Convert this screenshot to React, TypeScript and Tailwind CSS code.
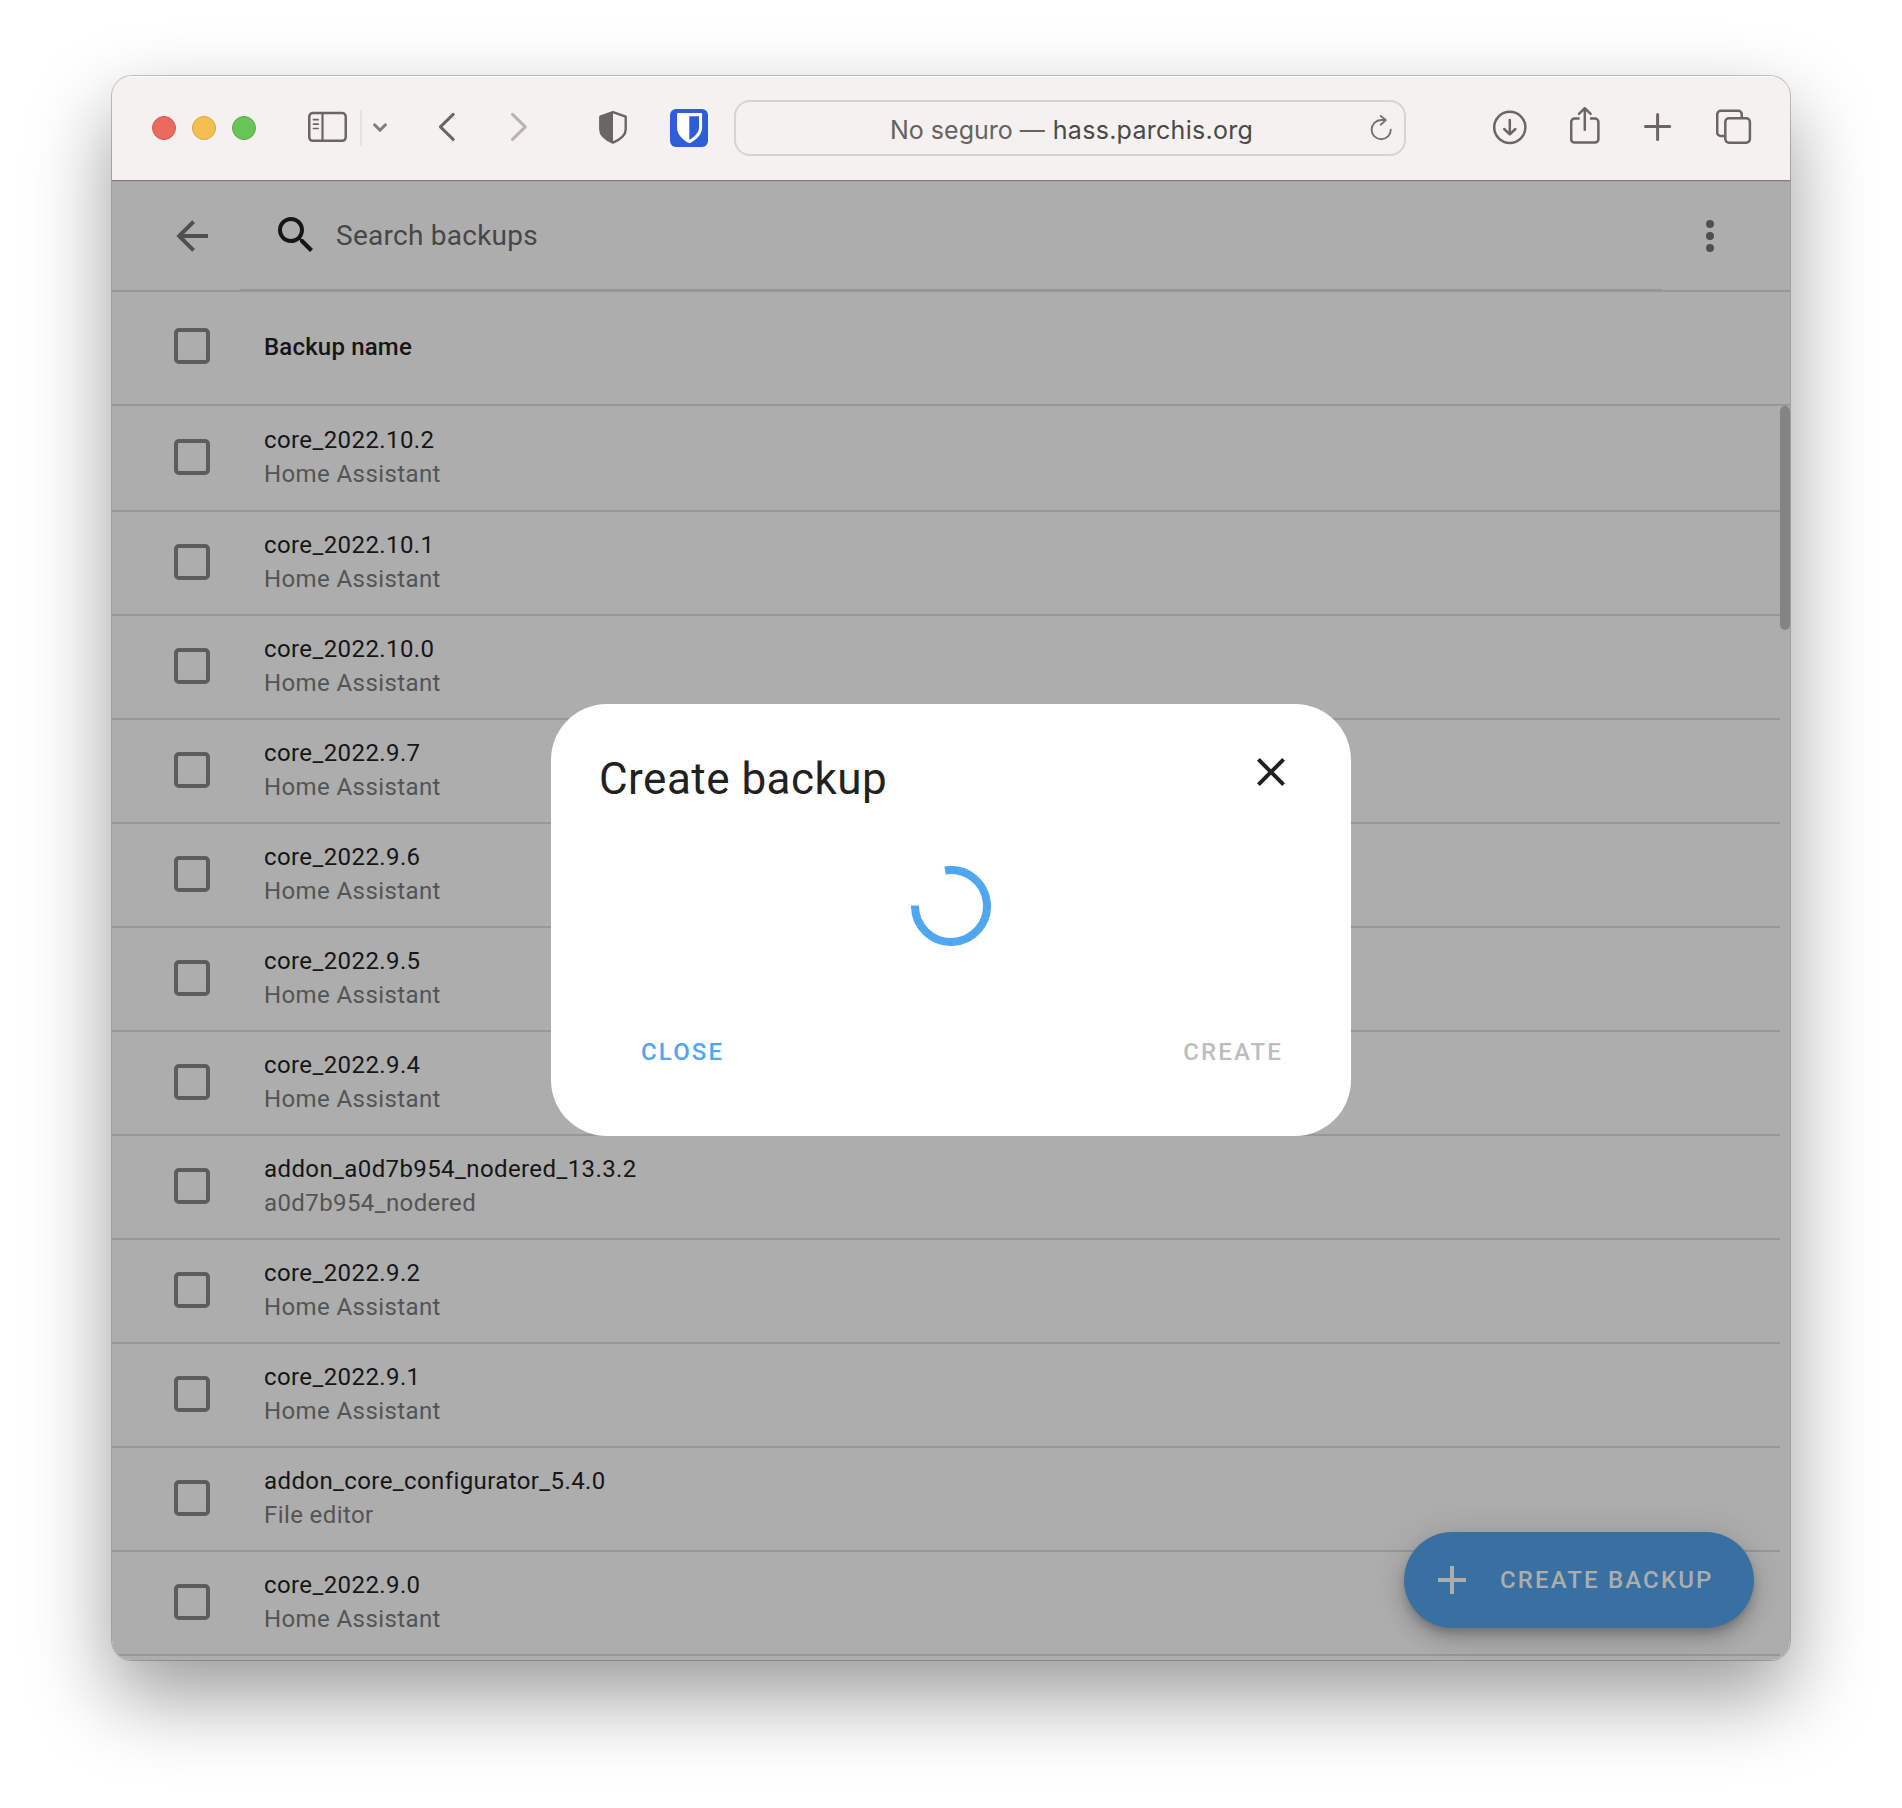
import React from "react";

type Backup = { name: string; source: string };

const HA = "Home Assistant";

const backups: Backup[] = [
  { name: "core_2022.10.2", source: HA },
  { name: "core_2022.10.1", source: HA },
  { name: "core_2022.10.0", source: HA },
  { name: "core_2022.9.7", source: HA },
  { name: "core_2022.9.6", source: HA },
  { name: "core_2022.9.5", source: HA },
  { name: "core_2022.9.4", source: HA },
  { name: "addon_a0d7b954_nodered_13.3.2", source: "a0d7b954_nodered" },
  { name: "core_2022.9.2", source: HA },
  { name: "core_2022.9.1", source: HA },
  { name: "addon_core_configurator_5.4.0", source: "File editor" },
  { name: "core_2022.9.0", source: HA },
];

function MdiIcon({ d, className }: { d: string; className: string }) {
  return (
    <svg viewBox="0 0 24 24" className={`size-12 shrink-0 fill-current ${className}`}>
      <path d={d} />
    </svg>
  );
}

function Checkbox() {
  return <span className="size-9 shrink-0 rounded-[5px] border-4 border-[#5d5d5d]" />;
}

/* Safari toolbar: every glyph sits in a full-height 104px column. */
function Toolbar() {
  return (
    <div className="flex h-[104px] shrink-0 items-center bg-[#f5f1f0] text-[#6b6564] shadow-[inset_0_1px_0_#fdfcfc]">
      <div className="ml-10 flex gap-4">
        <span className="size-6 rounded-full border border-[#d7584d] bg-[#ea6a5f]" />
        <span className="size-6 rounded-full border border-[#dfa43f] bg-[#f4bf50]" />
        <span className="size-6 rounded-full border border-[#56ae43] bg-[#66c556]" />
      </div>

      {/* sidebar */}
      <svg viewBox="0 0 39 104" className="ml-[52px] h-[104px] w-[39px]" fill="none" stroke="currentColor">
        <rect x="1.25" y="37.05" width="36.5" height="27.8" rx="3.6" strokeWidth="2.5" />
        <path d="M14.5 37v28" strokeWidth="2.2" />
        <path d="M5.5 43.7h4.6M5.5 48.2h4.6M5.5 52.5h4.6" strokeWidth="1.7" strokeLinecap="round" />
      </svg>
      <span className="ml-[13px] h-9 w-0.5 bg-[#e5e1e0]" />
      <svg viewBox="0 0 16 104" className="ml-[10px] h-[104px] w-4" fill="none" stroke="#817d7e" strokeWidth="3" strokeLinecap="round" strokeLinejoin="round">
        <path d="M2.6 48.8 8 54.3l5.4-5.5" />
      </svg>
      <svg viewBox="0 0 18 104" className="ml-[50px] h-[104px] w-[18px]" fill="none" stroke="currentColor" strokeWidth="3" strokeLinecap="round" strokeLinejoin="round">
        <path d="M15.200 38.400 2.400 50.900l12.800 12.500" />
      </svg>
      <svg viewBox="0 0 18 104" className="ml-[54px] h-[104px] w-[18px]" fill="none" stroke="#b8b3b2" strokeWidth="3" strokeLinecap="round" strokeLinejoin="round">
        <path d="M2.500 38.400 15.300 50.900 2.500 63.400" />
      </svg>

      {/* privacy shield */}
      <svg viewBox="0 0 28 104" className="ml-[71px] h-[104px] w-7">
        <path d="M14 36.200 26.700 40.700V53.500C26.700 59.200 20 64 14 66.600 8 64 1.300 59.200 1.300 53.500V40.700Z" fill="none" stroke="currentColor" strokeWidth="2.4" strokeLinejoin="round" />
        <path d="M14 36v31C8 64.500 1 59.500 1 53.500V40.500Z" fill="currentColor" />
      </svg>

      {/* password manager badge */}
      <svg viewBox="0 0 38 104" className="ml-[43px] h-[104px] w-[38px]">
        <rect y="33" width="38" height="38" rx="6" fill="#2f5dd7" />
        <path d="M8 37h23.200a.9.9 0 0 1 .9.900V51.500C32.100 59 25 64.800 19.500 67.200 14 64.800 7 59 7 51.500V37.900a1 1 0 0 1 1-.9Z" fill="#fff" />
        <path d="M19.300 40.200H29V51.500C29 56.500 24.300 61 19.300 63.800Z" fill="#2f5dd7" />
      </svg>

      {/* address field */}
      <div className="ml-[26px] flex h-14 w-[672px] items-center rounded-2xl border-2 border-[#d7d3d2] font-['Inter',sans-serif] text-[25px] leading-[30px]">
        <p className="ml-[154px] mt-[3px] whitespace-pre text-[#666261]">
          No seguro — <span className="ml-px tracking-[0.28px] text-[#4b4847]">hass.parchis.org</span>
        </p>
        <svg viewBox="0 0 24 52" className="ml-auto mr-[11px] h-[52px] w-6" fill="none" stroke="#777271" strokeWidth="1.9" strokeLinecap="round" strokeLinejoin="round">
          <path d="M21.800 27.600a9.600 9.600 0 1 1-9.600-9.600h4.600M11.700 13.900l5.100 4.200-5.100 4.600" />
        </svg>
      </div>

      {/* downloads */}
      <svg viewBox="0 0 34 104" className="ml-[87px] h-[104px] w-[34px]" fill="none" stroke="currentColor" strokeWidth="2.5" strokeLinecap="round" strokeLinejoin="round">
        <circle cx="16.8" cy="51.3" r="15.600" />
        <path d="M16.800 44v14M11.200 53l5.600 5.300 5.600-5.300" />
      </svg>
      {/* share */}
      <svg viewBox="0 0 30 104" className="ml-[43px] h-[104px] w-[30px]" fill="none" stroke="currentColor" strokeWidth="2.5" strokeLinecap="round" strokeLinejoin="round">
        <path d="M9.600 42.600H4.600a3.400 3.400 0 0 0-3.400 3.400V63.200a3.400 3.400 0 0 0 3.400 3.400H25a3.400 3.400 0 0 0 3.400-3.400V46a3.400 3.400 0 0 0-3.400-3.400H20" strokeLinecap="butt" />
        <path d="M14.800 53.800V32.500M9 37.800l5.800-5.600 5.800 5.600" />
      </svg>
      {/* new tab */}
      <svg viewBox="0 0 28 104" className="ml-[44px] h-[104px] w-7" fill="none" stroke="currentColor" strokeWidth="3" strokeLinecap="round">
        <path d="M13.600 38.400v25.200M1.500 50.500h24.200" />
      </svg>
      {/* tab overview */}
      <svg viewBox="0 0 36 104" className="ml-[44px] h-[104px] w-9" fill="none" stroke="currentColor" strokeWidth="2.5">
        <path d="M8.500 60H4.800a3.600 3.600 0 0 1-3.600-3.600V38.400a3.600 3.600 0 0 1 3.600-3.600H22.200a3.600 3.600 0 0 1 3.600 3.600V42" />
        <rect x="9.300" y="42.300" width="24.600" height="24.400" rx="3.600" />
      </svg>
    </div>
  );
}

function SearchHeader() {
  return (
    <div className="flex h-28 shrink-0 items-center border-b-2 border-[#979797] shadow-[inset_0_1px_0_#7f7f7f,inset_0_2px_0_#a1a1a1]">
      <MdiIcon
        className="ml-14 mt-0.5 text-[#4f4f4f]"
        d="M20,11V13H8L13.5,18.5L12.08,19.92L4.16,12L12.08,4.08L13.5,5.5L8,11H20Z"
      />
      <div className="ml-6 flex h-full w-[1422px] items-center border-b border-[#969696]">
        <MdiIcon
          className="mt-px ml-8 text-[#161616]"
          d="M9.5,3A6.5,6.5 0 0,1 16,9.5C16,11.11 15.41,12.59 14.44,13.73L14.71,14H15.5L20.5,19L19,20.5L14,15.5V14.71L13.73,14.44C12.59,15.41 11.11,16 9.5,16A6.5,6.5 0 0,1 3,9.5A6.5,6.5 0 0,1 9.5,3M9.5,5C7,5 5,7 5,9.5C5,12 7,14 9.5,14C12,14 14,12 14,9.5C14,7 12,5 9.5,5Z"
        />
        <span className="ml-4 mt-0.5 text-[28px] leading-8 tracking-[0.26px] text-[#474747]">Search backups</span>
      </div>
      <MdiIcon
        className="ml-6 mt-0.5 text-[#4f4f4f]"
        d="M12,16A2,2 0 0,1 14,18A2,2 0 0,1 12,20A2,2 0 0,1 10,18A2,2 0 0,1 12,16M12,10A2,2 0 0,1 14,12A2,2 0 0,1 12,14A2,2 0 0,1 10,12A2,2 0 0,1 12,10M12,4A2,2 0 0,1 14,6A2,2 0 0,1 12,8A2,2 0 0,1 10,6A2,2 0 0,1 12,4Z"
      />
    </div>
  );
}

function BackupRow({ backup }: { backup: Backup }) {
  return (
    <div className="flex h-[104px] shrink-0 items-start border-t-2 border-[#979797] px-[62px] pt-4 first:border-t-0 first:pt-[17px]">
      <span className="mt-4 flex">
        <Checkbox />
      </span>
      <div className="ml-[54px] text-2xl leading-[34px] tracking-[0.4px]">
        <p className="text-[#161616]">{backup.name}</p>
        <p className="text-[#545454]">{backup.source}</p>
      </div>
    </div>
  );
}

function BackupTable() {
  return (
    <div className="flex min-h-0 grow flex-col">
      <div className="flex h-[114px] shrink-0 items-center border-b-2 border-[#979797] px-[62px]">
        <span className="-mt-1 flex">
          <Checkbox />
        </span>
        <span className="-mt-0.5 ml-[54px] text-2xl font-medium leading-[34px] tracking-[0.18px] text-[#161616]">Backup name</span>
      </div>
      <div className="flex min-h-0 grow items-start overflow-hidden">
        <div className="flex grow flex-col">
          {backups.map((b) => (
            <BackupRow key={b.name} backup={b} />
          ))}
          <div className="h-2 border-t-2 border-[#979797]" />
        </div>
        <span className="h-56 w-2.5 rounded-full bg-[#848484]" />
      </div>
    </div>
  );
}

function CreateButton() {
  return (
    <button className="absolute bottom-8 right-9 flex h-24 w-[350px] items-center rounded-full bg-[#3870a1] text-[#adadad] shadow-[0_6px_10px_-2px_rgba(0,0,0,0.2),0_12px_20px_rgba(0,0,0,0.14),0_2px_36px_rgba(0,0,0,0.12)]">
      <MdiIcon className="ml-6" d="M19,13H13V19H11V13H5V11H11V5H13V11H19V13Z" />
      <span className="ml-6 whitespace-nowrap text-2xl font-medium leading-8 tracking-[2.14px]">CREATE BACKUP</span>
    </button>
  );
}

function CreateDialog() {
  return (
    <div className="absolute left-[439px] top-[628px] flex h-[432px] w-[800px] flex-col rounded-[56px] bg-white">
      <div className="flex items-start justify-between pl-12 pr-14 pt-11">
        <h2 className="mt-1 text-[44px] leading-[54px] tracking-[0.48px] text-[#212121]">Create backup</h2>
        <MdiIcon
          className="text-[#212121]"
          d="M19,6.41L17.59,5L12,10.59L6.41,5L5,6.41L10.59,12L5,17.59L6.41,19L12,13.41L17.59,19L19,17.59L13.41,12L19,6.41Z"
        />
      </div>
      <div className="mt-[60px] flex justify-center">
        <svg viewBox="-40 -40 80 80" className="size-20" fill="none" stroke="#51a7ef" strokeWidth="8">
          <path d="M-5.940-35.510A36 36 0 1 1-36-.5" />
        </svg>
      </div>
      <div className="mt-[90px] flex justify-between pl-[90px] pr-[68px] text-2xl font-medium leading-8 tracking-[2.14px]">
        <button className="text-[#51a7ef]">CLOSE</button>
        <button className="text-[#bdbdbd]">CREATE</button>
      </div>
    </div>
  );
}

export default function App() {
  return (
    <div className="flex h-[1808px] w-[1902px] items-start justify-center overflow-hidden bg-white pt-[76px] font-['Roboto',sans-serif]">
      <div className="rounded-[20px] shadow-[0_0_0_1px_rgba(0,0,0,0.22),0_36px_82px_rgba(0,0,0,0.4)]">
        <div className="relative flex h-[1584px] w-[1678px] flex-col overflow-hidden rounded-[20px] bg-[#adadad]">
          <Toolbar />
          <SearchHeader />
          <BackupTable />
          <CreateButton />
          <CreateDialog />
        </div>
      </div>
    </div>
  );
}
